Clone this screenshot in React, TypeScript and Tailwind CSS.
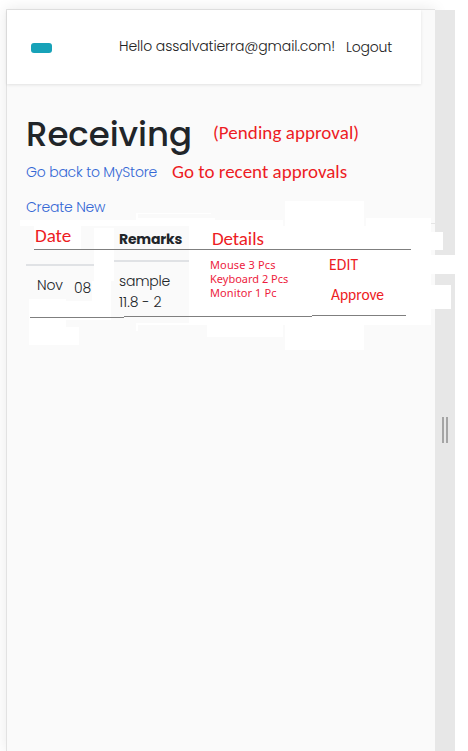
import React from "react";

const patches = [
  "left-[20px] top-[220px] w-[195px] h-[6px]",
  "left-[136px] top-[213px] w-[75px] h-[1px]",
  "left-[136px] top-[213px] w-[2px] h-[6px]",
  "left-[136px] top-[218px] w-[79px] h-[3px]",
  "left-[34px] top-[226px] w-[47px] h-[23px]",
  "left-[94px] top-[228px] w-[20px] h-[53px]",
  "left-[92px] top-[281px] w-[19px] h-[20px]",
  "left-[29px] top-[299px] w-[37px] h-[46px]",
  "left-[66px] top-[301px] w-[45px] h-[19px]",
  "left-[66px] top-[327px] w-[13px] h-[18px]",
  "left-[189px] top-[226px] w-[96px] h-[99px]",
  "left-[136px] top-[323px] w-[2px] h-[8px]",
  "left-[138px] top-[323px] w-[69px] h-[2px]",
  "left-[207px] top-[220px] w-[76px] h-[117px]",
  "left-[285px] top-[201px] w-[79px] h-[149px]",
  "left-[283px] top-[226px] w-[85px] h-[99px]",
  "left-[366px] top-[218px] w-[65px] h-[107px]",
  "left-[431px] top-[232px] w-[12px] h-[18px]",
  "left-[431px] top-[255px] w-[37px] h-[19px]",
  "left-[431px] top-[285px] w-[20px] h-[24px]",
];

const body = "font-['Poppins','Inter',sans-serif] font-light whitespace-nowrap";
const note = "font-['Calibri','Lato',sans-serif] text-[#ed1c24] whitespace-nowrap";

function Header() {
  return (
    <header className="flex h-[74px] w-[414px] items-start bg-white shadow-[0_1px_3px_rgba(0,0,0,0.10)]">
      <span className="ml-[24px] mt-[33px] h-[10px] w-[21px] rounded-[3px] bg-[#17a2b8]" />
      <span className={`${body} ml-[67px] mt-[26px] w-[227px] text-[14px] leading-[20px] tracking-[-0.11px] text-[#222]`}>
        Hello assalvatierra@gmail.com!
      </span>
      <span className={`${body} mt-[27px] text-[14px] leading-[20px] tracking-[-0.2px] text-[#222]`}>Logout</span>
    </header>
  );
}

function Records() {
  return (
    <section className="h-[98px] text-[#212529]">
      <div className="flex h-[24px] items-start">
        <span className={`${note} ml-[28px] w-[84px] text-[19px] leading-[22px]`}>Date</span>
        <span className="w-[93px] font-['Poppins','Inter',sans-serif] text-[14px] font-bold leading-[28px] tracking-[-0.2px]">Remarks</span>
        <span className={`${note} text-[19px] leading-[28px] tracking-[-0.1px]`}>Details</span>
      </div>
      <div className="ml-[27px] h-px w-[377px] bg-[#7f7f7f]" />
      <div className="flex h-[65px] items-start">
        <div className="ml-[19px] mt-[14px] w-[68px] shrink-0 border-t-2 border-[#e0e2e5]">
          <div className={`${body} flex pl-[11px] pt-[9px] text-[14px] leading-[20px] tracking-[-0.11px]`}>
            <span className="w-[37px]">Nov</span>
            <span className="mt-[3px]">08</span>
          </div>
        </div>
        <div className={`${body} ml-[20px] mt-[10px] w-[75px] shrink-0 border-t-2 border-[#e0e2e5] pl-[5px] pt-[9px] text-[14px] leading-[21px]`}>
          <div className="tracking-[-0.2px]">sample</div>
          <div>11.8 - 2</div>
        </div>
        <div className="ml-[21px] mt-[8px] w-[119px] whitespace-nowrap font-['Noto_Sans',sans-serif] text-[11px] leading-[14px] text-[#ed1c40]">
          <div className="tracking-[0.14px]">Mouse 3 Pcs</div>
          <div>Keyboard 2 Pcs</div>
          <div className="tracking-[0.1px]">Monitor 1 Pc</div>
        </div>
        <div className={`${note} mt-[5px] text-[15.5px] leading-[20px]`}>
          <div className="tracking-[0.2px]">EDIT</div>
          <div className="ml-[2px] mt-[10px]">Approve</div>
        </div>
      </div>
      <div className="flex items-start pl-[23px]">
        <span className="mt-[2px] h-px w-[94px] bg-[#7f7f7f]" />
        <span className="mt-px h-px w-[188px] bg-[#7f7f7f]" />
        <span className="h-px w-[94px] bg-[#7f7f7f]" />
      </div>
    </section>
  );
}

export default function App() {
  return (
    <div className="relative flex h-[751px] w-[468px] overflow-hidden bg-white pl-[6px] pt-[9px]">
      <main className="h-[742px] w-[429px] border-l border-t border-[#e2e2e2] bg-[#fafafa] shadow-[0_0_14px_rgba(0,0,0,0.09)]">
        <div className="relative z-20">
          <Header />
          <div className="flex h-[76px] items-start pl-[19px] pt-[25px]">
            <h1 className="w-[187px] font-['Poppins','Inter',sans-serif] text-[34px] font-medium leading-[50px] tracking-[-0.05px] text-[#212529]">
              Receiving
            </h1>
            <span className={`${note} text-[19px] leading-[48px] tracking-[0.06px]`}>(Pending approval)</span>
          </div>
          <div className="flex h-[37px] items-start pl-[19px]">
            <span className={`${body} mt-[2px] w-[146px] text-[14px] leading-[20px] tracking-[-0.21px] text-[#3467d5]`}>Go back to MyStore</span>
            <span className={`${note} text-[19px] leading-[24px]`}>Go to recent approvals</span>
          </div>
          <div className={`${body} h-[28px] pl-[19px] text-[14px] leading-[20px] tracking-[-0.2px] text-[#3467d5]`}>Create New</div>
          <Records />
        </div>
      </main>
      <aside className="z-[1] mt-px flex h-[741px] w-[20px] justify-center gap-[2px] bg-[#e7e7e7] pt-[407px]">
        <span className="h-[26px] w-[2px] bg-[#a5a5a5]" />
        <span className="h-[26px] w-[2px] bg-[#a5a5a5]" />
      </aside>
      {patches.map((place) => (
        <span key={place} className={`absolute z-10 bg-white ${place}`} />
      ))}
      <span className="absolute left-[431px] top-[223px] h-px w-[4px] bg-[#e5e5e5]" />
    </div>
  );
}
